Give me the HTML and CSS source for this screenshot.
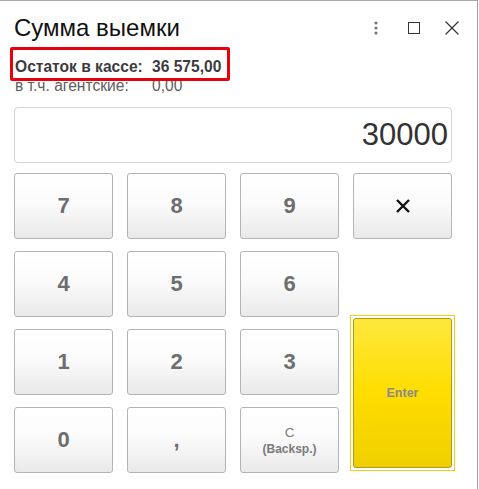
FILE: index.html
```html
<!DOCTYPE html>
<html lang="ru">
<head>
<meta charset="utf-8">
<link rel="stylesheet" href="styles.css">
</head>
<body>
<div class="window">
  <div class="titlebar">
    <div class="title">Сумма выемки</div>
    <div class="controls">
      <svg class="ic" width="14" height="14" viewBox="0 0 14 14"><circle cx="7" cy="2" r="1.6" fill="#777"/><circle cx="7" cy="7" r="1.6" fill="#777"/><circle cx="7" cy="12" r="1.6" fill="#777"/></svg>
      <svg class="ic" width="14" height="14" viewBox="0 0 14 14"><rect x="1.5" y="1.5" width="11" height="11" fill="none" stroke="#333" stroke-width="1"/></svg>
      <svg class="ic" width="14" height="14" viewBox="0 0 14 14"><path d="M0.5 0.5 L13.5 13.5 M13.5 0.5 L0.5 13.5" stroke="#333" stroke-width="1.2"/></svg>
    </div>
  </div>
  <div class="info">
    <div class="row main"><span class="lbl">Остаток в кассе:</span><span class="val">36 575,00</span></div>
    <div class="row sub"><span class="lbl">в т.ч. агентские:</span><span class="val">0,00</span></div>
    <div class="highlight"></div>
  </div>
  <div class="display">30000</div>
  <div class="pad">
    <button class="key">7</button>
    <button class="key">8</button>
    <button class="key">9</button>
    <button class="key del"><svg width="16" height="14" viewBox="0 0 16 14"><path d="M2 1 L14 13 M14 1 L2 13" stroke="#111" stroke-width="2.4"/></svg></button>
    <button class="key">4</button>
    <button class="key">5</button>
    <button class="key">6</button>
    <div class="spacer"></div>
    <button class="key">1</button>
    <button class="key">2</button>
    <button class="key">3</button>
    <div class="enter-wrap"><button class="enter">Enter</button></div>
    <button class="key">0</button>
    <button class="key">,</button>
    <button class="key small"><span class="c">C</span><span>(Backsp.)</span></button>
  </div>
</div>
</body>
</html>
```
FILE: styles.css
```css
html, body {
  margin: 0;
  padding: 0;
  background: #fff;
}
body {
  font-family: "Liberation Sans", Arial, sans-serif;
}
.window {
  width: 477px;
  height: 488px;
  border-top: 1px solid #a8a8a8;
  border-right: 1px solid #a0a0a0;
  background: #fff;
  position: relative;
}
.titlebar {
  display: flex;
  align-items: center;
  justify-content: space-between;
  height: 44px;
  padding: 0 18px 0 14px;
}
.title {
  font-size: 24px;
  color: #111;
  margin-top: 10px;
}
.controls {
  display: flex;
  gap: 24px;
  align-items: center;
  margin-top: 10px;
}
.info {
  position: relative;
  padding: 10px 0 0 15px;
  height: 52px;
  box-sizing: border-box;
}
.row {
  display: flex;
  font-size: 15.6px;
  line-height: 18px;
}
.row .lbl {
  width: 137px;
}
.main {
  font-weight: bold;
  color: #3c3c3c;
  margin-top: 3px;
}
.sub {
  color: #5e5e5e;
  margin-top: 1px;
}
.highlight {
  position: absolute;
  left: 10px;
  top: 2px;
  width: 214px;
  height: 28px;
  border: 3px solid #e8000a;
  border-radius: 2px;
}
.display {
  margin: 10px 0 0 14px;
  height: 54px;
  border: 1px solid #d4d4d4;
  border-radius: 4px;
  box-sizing: content-box;
  font-size: 31px;
  color: #333;
  text-align: right;
  line-height: 54px;
  padding-right: 3px;
  width: 433px;
}
.pad {
  display: grid;
  grid-template-columns: repeat(4, 99px);
  grid-auto-rows: 66px;
  column-gap: 14px;
  row-gap: 12px;
  margin: 10px 0 0 14px;
}
.key {
  border: 1px solid #b4b4b4;
  border-radius: 3px;
  background: linear-gradient(#ffffff 0%, #fbfbfb 45%, #e9e9e9 100%);
  font-family: "Liberation Sans", Arial, sans-serif;
  font-weight: bold;
  font-size: 22px;
  color: #6e6e6e;
  padding: 0;
  display: flex;
  align-items: center;
  justify-content: center;
}
.key.del svg {
  display: block;
}
.key.small {
  flex-direction: column;
  font-size: 12px;
  line-height: 16px;
  color: #7a7a7a;
  padding-top: 2px;
}
.key.small .c {
  font-weight: normal;
  font-size: 13.5px;
}
.enter-wrap {
  grid-column: 4;
  grid-row: 3 / 5;
  margin: -14px -3px 2px -3px;
  border: 1px solid #f5cc1a;
  padding: 2px;
  display: flex;
}
.enter {
  flex: 1;
  border: 1px solid #b09a10;
  border-radius: 3px;
  background: linear-gradient(#ffe83c 0%, #ffdd00 50%, #efcf00 100%);
  font-family: "Liberation Sans", Arial, sans-serif;
  font-weight: bold;
  font-size: 12.5px;
  color: #8a8a8a;
  padding: 0;
}
```
